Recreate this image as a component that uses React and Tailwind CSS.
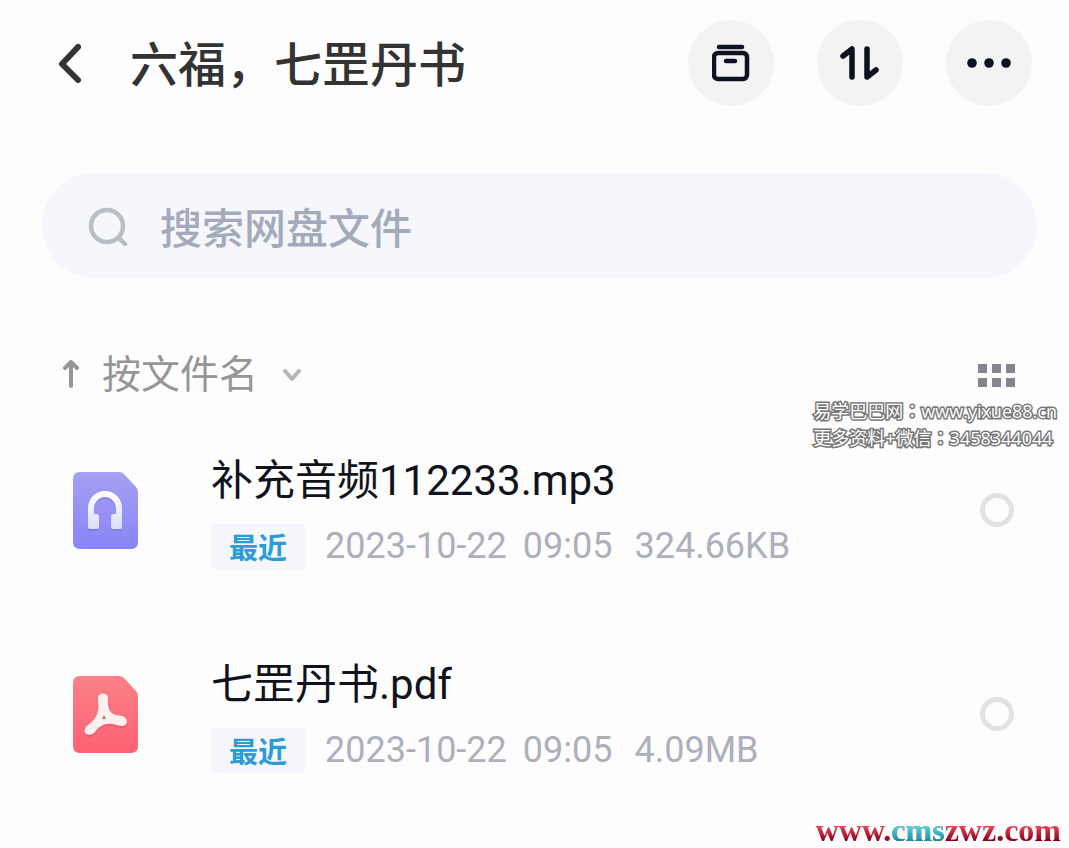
import { useState } from "react"
import clsx from "clsx"

const files = [
  { id: "mp3", name: "补充音频112233.mp3", date: "2023-10-22", time: "09:05", size: "324.66KB", type: "audio" },
  { id: "pdf", name: "七罡丹书.pdf", date: "2023-10-22", time: "09:05", size: "4.09MB", type: "pdf" },
]

const AudioIcon = () => (
  <svg viewBox="0 0 65 77" className="h-[77px] w-[65px]" aria-hidden="true">
    <defs>
      <linearGradient id="audio-bg" x1="0" y1="0" x2="0" y2="1">
        <stop offset="0" stopColor="#a6a0f0" />
        <stop offset="1" stopColor="#8885f8" />
      </linearGradient>
      <linearGradient id="audio-fg" x1="0" y1="0" x2="0" y2="1">
        <stop offset="0" stopColor="#ffffff" />
        <stop offset="1" stopColor="#dddcfb" />
      </linearGradient>
    </defs>
    <path d="M7 0H46Q49 0 51 2L63 15Q65 17 65 20V70Q65 77 58 77H7Q0 77 0 70V7Q0 0 7 0Z" fill="url(#audio-bg)" />
    <path
      d="M15 55V36C15 26 23 19 32 19S49 26 49 36V55Q49 57 47 57H40Q38 57 38 55V45Q38 42 41 42H43V37C43 30 38 25 32 25S21 30 21 37V42H23Q26 42 26 45V55Q26 57 24 57H17Q15 57 15 55Z"
      fill="#615ac5"
      opacity="0.3"
      transform="translate(0 2)"
    />
    <path
      d="M15 55V36C15 26 23 19 32 19S49 26 49 36V55Q49 57 47 57H40Q38 57 38 55V45Q38 42 41 42H43V37C43 30 38 25 32 25S21 30 21 37V42H23Q26 42 26 45V55Q26 57 24 57H17Q15 57 15 55Z"
      fill="url(#audio-fg)"
    />
  </svg>
)

const PdfIcon = () => (
  <svg viewBox="0 0 65 77" className="h-[77px] w-[65px]" aria-hidden="true">
    <defs>
      <linearGradient id="pdf-bg" x1="0" y1="0" x2="0" y2="1">
        <stop offset="0" stopColor="#f98288" />
        <stop offset="1" stopColor="#ff6074" />
      </linearGradient>
    </defs>
    <path d="M7 0H46Q49 0 51 2L63 15Q65 17 65 20V70Q65 77 58 77H7Q0 77 0 70V7Q0 0 7 0Z" fill="url(#pdf-bg)" />
    <path
      d="M25 22C25 16 35 16 35 22C35 27 34 30 37 35C39 39 43 39 49 40C56 42 55 50 49 50C43 50 40 47 34 48C28 49 25 52 22 56C18 61 10 59 12 53C14 48 18 48 22 42C27 35 25 28 25 22Z"
      fill="#c33748"
      opacity="0.3"
      transform="translate(0 2)"
    />
    <path
      d="M25 22C25 16 35 16 35 22C35 27 34 30 37 35C39 39 43 39 49 40C56 42 55 50 49 50C43 50 40 47 34 48C28 49 25 52 22 56C18 61 10 59 12 53C14 48 18 48 22 42C27 35 25 28 25 22Z"
      fill="#fff0f0"
    />
    <path d="M31 39L33 43H29Z" fill="#9b7a80" />
  </svg>
)

const RoundButton = ({ label, children }) => (
  <button
    type="button"
    aria-label={label}
    className="flex size-[86px] items-center justify-center rounded-full bg-[#f3f3f4] text-[#0c1220]"
  >
    {children}
  </button>
)

function Header() {
  return (
    <header className="flex items-center justify-between pr-[5px] pl-4">
      <div className="flex items-center gap-12">
        <button type="button" aria-label="返回" className="text-[#333]">
          <svg viewBox="0 0 24 40" className="h-10 w-6" fill="none" stroke="currentColor" strokeWidth="6" strokeLinecap="round" strokeLinejoin="round">
            <path d="M20 4L4 21L20 37" />
          </svg>
        </button>
        <h1 className="pb-1 font-['Noto_Sans_CJK_SC',sans-serif] text-[48px] leading-[60px] font-medium whitespace-nowrap text-[#333]">
          六福，七罡丹书
        </h1>
      </div>

      <div className="flex gap-[43px]">
        <RoundButton label="收纳">
          <svg viewBox="0 0 38 38" className="size-[38px]" fill="none" stroke="currentColor" strokeWidth="4.5" strokeLinecap="round">
            <path d="M7 3H30" />
            <rect x="2" y="9" width="33" height="26" rx="4" />
            <path d="M14 17H23" />
          </svg>
        </RoundButton>
        <RoundButton label="排序">
          <svg viewBox="0 0 40 36" className="h-9 w-10" fill="none" stroke="currentColor" strokeWidth="5.5" strokeLinecap="round" strokeLinejoin="round">
            <path d="M3 11L12 4V32" />
            <path d="M27 4V32L36 25" />
          </svg>
        </RoundButton>
        <RoundButton label="更多">
          <svg viewBox="0 0 44 10" className="h-[10px] w-11" fill="currentColor">
            <circle cx="5" cy="5" r="4.8" />
            <circle cx="22" cy="5" r="4.8" />
            <circle cx="39" cy="5" r="4.8" />
          </svg>
        </RoundButton>
      </div>
    </header>
  )
}

function FileRow({ file, checked, onToggle }) {
  return (
    <li className="flex items-center pr-[23px] pl-[31px]">
      {file.type === "audio" ? <AudioIcon /> : <PdfIcon />}
      <div className="ml-[73px] min-w-0 flex-1">
        <label htmlFor={file.id} className="block text-[42px] leading-[60px] text-[#10131c]">
          {file.name}
        </label>
        <div className="mt-[13px] flex items-center text-4xl leading-[45px] whitespace-nowrap text-[#adb0bb]">
          <span className="mr-5 bg-[#f5f7fc] px-[18px] font-['Noto_Sans_CJK_SC',sans-serif] text-[29px] leading-[45px] font-bold text-[#2b9cd6]">
            最近
          </span>
          <span>{file.date}</span>
          <span className="ml-4">{file.time}</span>
          <span className="ml-[22px]">{file.size}</span>
        </div>
      </div>
      <input
        id={file.id}
        type="checkbox"
        checked={checked}
        onChange={onToggle}
        className={clsx(
          "size-[34px] shrink-0 appearance-none rounded-full border-[5px]",
          checked ? "border-[#1f98d5]" : "border-[#e2e2e2]"
        )}
      />
    </li>
  )
}

export default function App() {
  const [selected, setSelected] = useState([])

  const toggle = (id) =>
    setSelected((prev) => (prev.includes(id) ? prev.filter((x) => x !== id) : [...prev, id]))

  return (
    <main
      lang="zh-CN"
      className="relative min-h-screen bg-[#fdfdfd] pt-5 pr-8 pl-[42px] font-[Roboto,'Noto_Sans_CJK_SC',sans-serif]"
    >
      <Header />

      <label className="mt-[67px] flex h-[105px] items-center gap-8 rounded-full bg-[#f5f7fc] pr-10 pl-[46px]">
        <svg viewBox="0 0 40 40" className="size-10 shrink-0" fill="none" stroke="#bbbec4" strokeWidth="4.5" strokeLinecap="round">
          <circle cx="19" cy="20" r="16" />
          <path d="M31 32L37 38" />
        </svg>
        <input
          type="search"
          aria-label="搜索网盘文件"
          placeholder="搜索网盘文件"
          className="min-w-0 flex-1 bg-transparent font-['Noto_Sans_CJK_SC',sans-serif] text-[42px] leading-[60px] font-medium text-[#333] outline-none placeholder:text-[#a3abbb]"
        />
      </label>

      <div className="mt-[69px] flex items-center justify-between pr-[22px] pl-5">
        <button type="button" className="flex items-center text-[#969696]">
          <svg viewBox="0 0 18 30" className="h-[30px] w-[18px]" fill="none" stroke="currentColor" strokeWidth="4" strokeLinecap="round" strokeLinejoin="round">
            <path d="M9 26V2M3 8L9 2L15 8" />
          </svg>
          <span className="ml-[22px] text-[39px] leading-[56px]">按文件名</span>
          <svg viewBox="0 0 20 14" className="ml-6 h-[14px] w-5" fill="none" stroke="#b5b5b5" strokeWidth="4" strokeLinecap="round" strokeLinejoin="round">
            <path d="M3 3L10 11L17 3" />
          </svg>
        </button>
        <button type="button" aria-label="网格视图" className="grid grid-cols-3 gap-[5px]">
          {[0, 1, 2, 3, 4, 5].map((n) => (
            <span key={n} className="size-[9px] bg-[#83858f]" />
          ))}
        </button>
      </div>

      <ul className="mt-12 flex flex-col gap-[86px] pb-[75px]">
        {files.map((file) => (
          <FileRow
            key={file.id}
            file={file}
            checked={selected.includes(file.id)}
            onToggle={() => toggle(file.id)}
          />
        ))}
      </ul>

      <div className="pointer-events-none absolute top-[397px] right-3 font-['Open_Sans','Noto_Sans_CJK_SC',sans-serif] text-lg leading-[26px] whitespace-nowrap text-white [-webkit-text-stroke:3px_#777] [paint-order:stroke_fill]">
        <p>易学巴巴网<span className="font-['Noto_Sans_CJK_TC',sans-serif]" lang="zh-TW">：</span>www.yixue88.cn</p>
        <p>更多资料+微信<span className="font-['Noto_Sans_CJK_TC',sans-serif]" lang="zh-TW">：</span>3458344044</p>
      </div>

      <p className="absolute right-2 bottom-0 bg-linear-to-b from-[#ee3f5c] from-40% to-[#850018] to-80% bg-clip-text font-['Liberation_Serif',serif] text-[32px] leading-9 font-bold text-transparent">
        www.<span className="bg-linear-to-b from-[#4fd8e0] from-40% to-[#0794a2] to-80% bg-clip-text">cms</span>zwz.com
      </p>
    </main>
  )
}
